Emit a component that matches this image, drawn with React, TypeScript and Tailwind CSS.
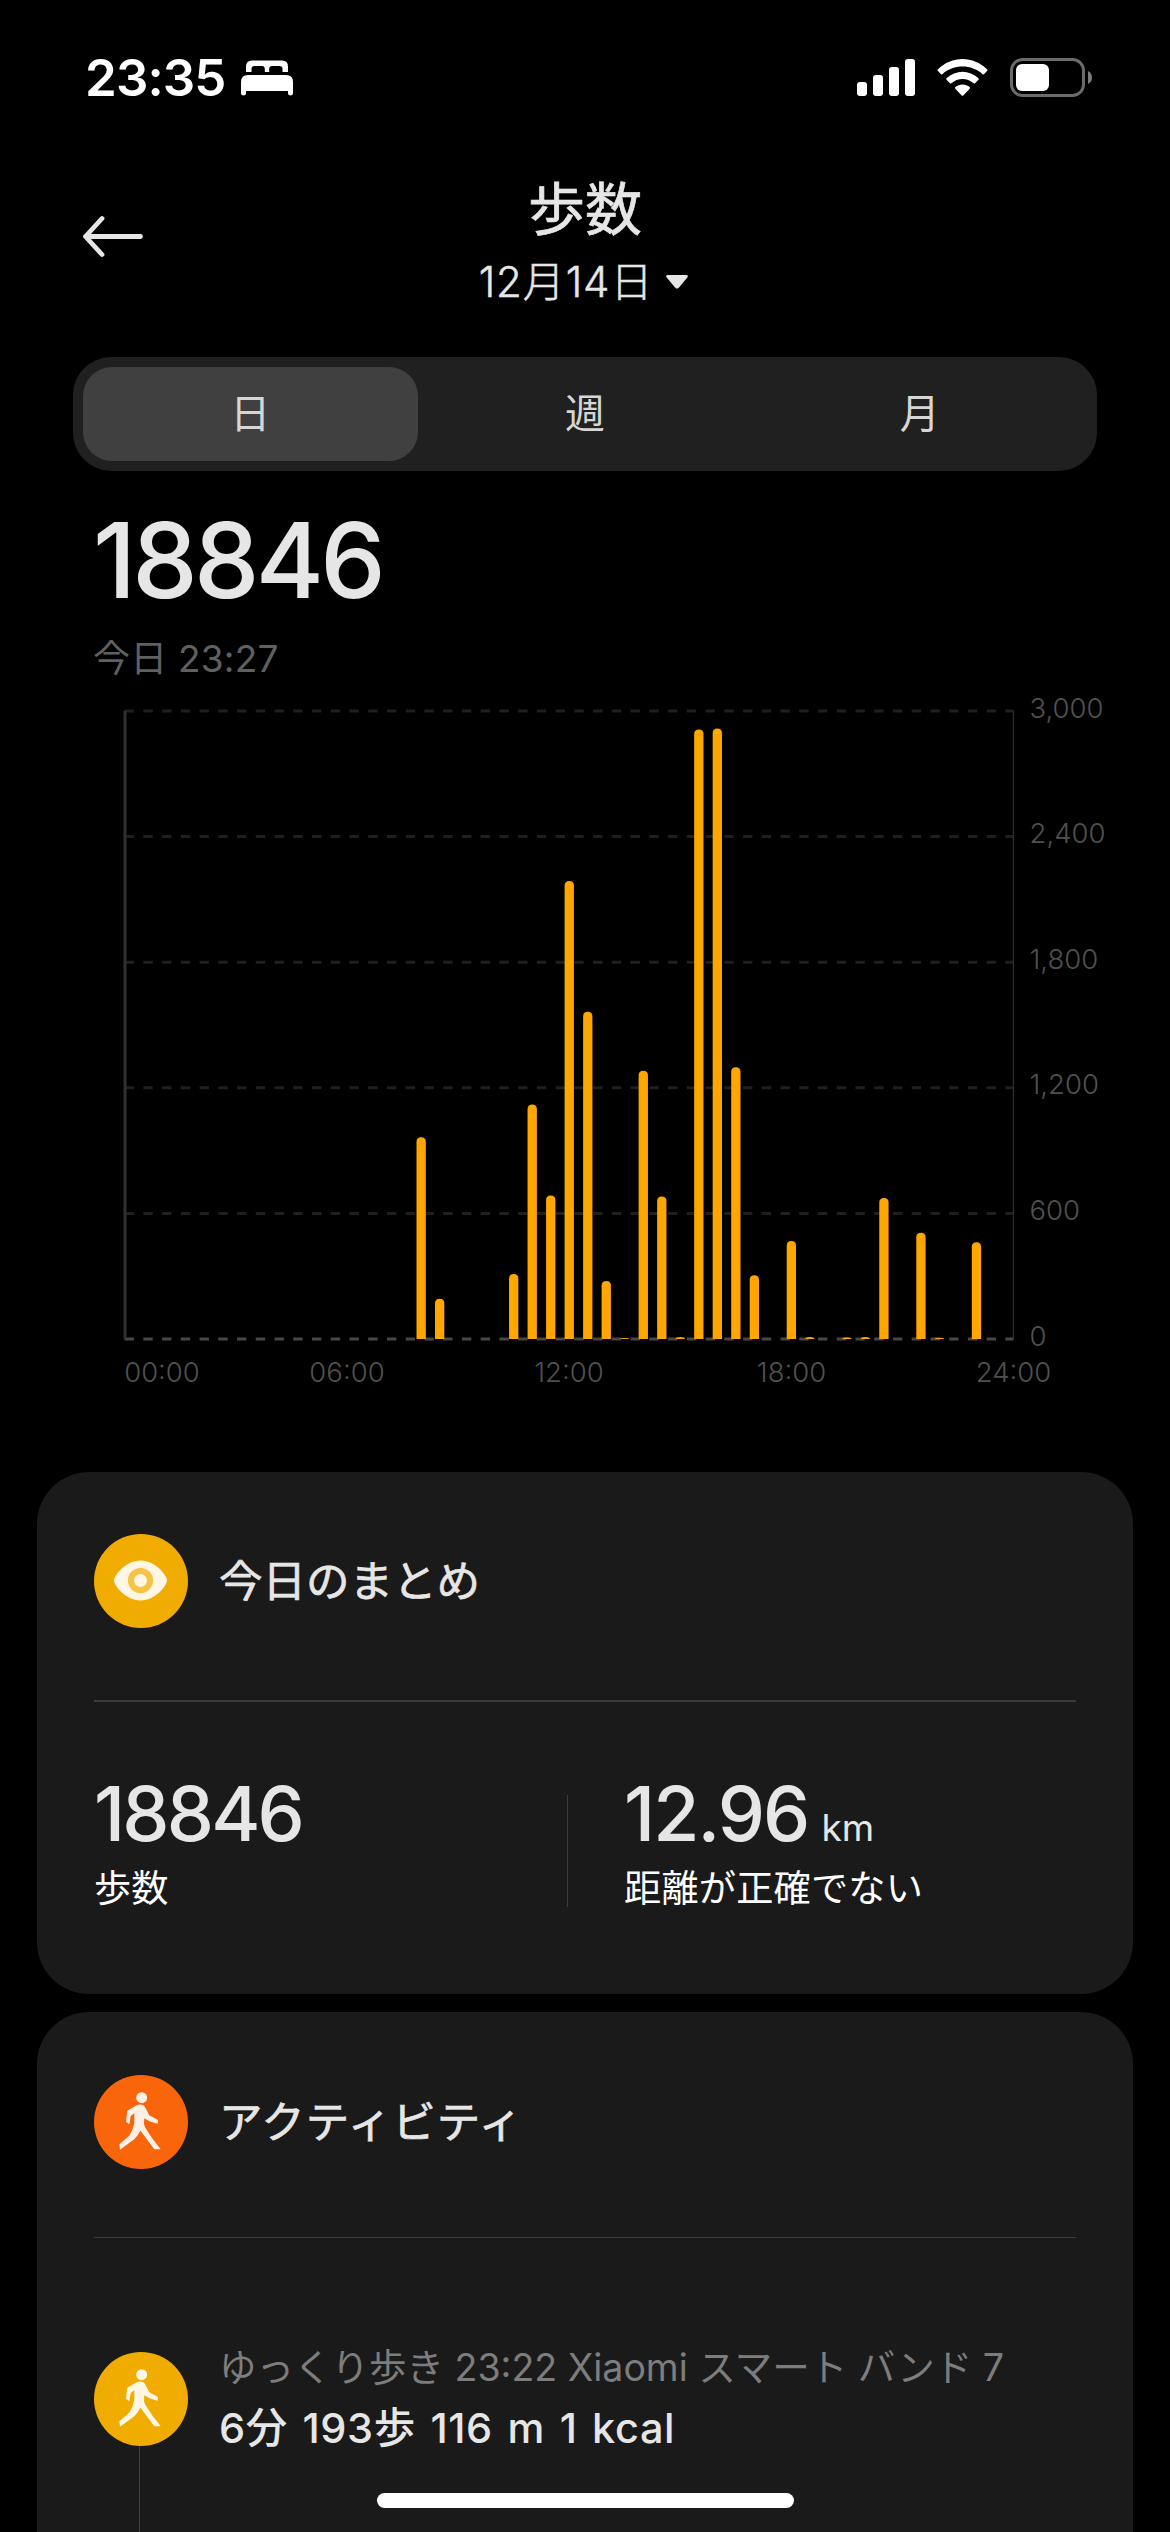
import type { ReactNode } from "react";

// steps per half hour: [slot, steps]
const steps = [
  [16, 964], [17, 192], [21, 310], [22, 1120], [23, 686], [24, 2188], [25, 1563],
  [26, 277], [27, 5], [28, 1282], [29, 681], [30, 9], [31, 2912], [32, 2916],
  [33, 1298], [34, 304], [36, 468], [37, 10], [39, 8], [40, 10], [41, 674],
  [43, 508], [44, 6], [46, 462],
];

const yTicks = ["3,000", "2,400", "1,800", "1,200", "600", "0"];

const xTicks = [
  { label: "00:00", x: 162 },
  { label: "06:00", x: 347 },
  { label: "12:00", x: 569 },
  { label: "18:00", x: 791.5 },
  { label: "24:00", x: 1013.5 },
];

const LEFT = 125;
const RIGHT = 1013.5;
const TOP = 29;
const BOTTOM = 657;

function StatusBar() {
  return (
    <div className="flex h-[155px] items-start justify-between pl-[85px] pr-[77px] pt-[58px] text-white">
      <div className="flex items-center">
        <span className="w-[156px] text-[51px] font-semibold leading-[39px] tracking-[-0.9px]">23:35</span>
        <svg width="52" height="36" viewBox="0 0 52 36" fill="currentColor">
          <path d="M5 12V6.5Q5 .5 11 .5H41Q47 .5 47 6.5V12H41.5V9Q41.5 6 38.500 6H31Q28.200 6 28.200 9V12H23.800V9Q23.800 6 21 6H13.500Q10.500 6 10.500 9V12Z" />
          <path d="M0 22Q0 15 7 15H45Q52 15 52 22V33.500Q52 35.500 49.500 35.500T47 33.500V31H5V33.500Q5 35.500 2.500 35.500T0 33.500Z" />
        </svg>
      </div>
      <div className="flex items-center">
        <svg width="58" height="39" viewBox="0 0 58 39" fill="currentColor">
          <rect x="0" y="24" width="10" height="14" rx="3" />
          <rect x="16" y="17" width="10" height="21" rx="3" />
          <rect x="32" y="9" width="10" height="29" rx="3" />
          <rect x="48" y="1" width="10" height="37" rx="3" />
        </svg>
        <svg className="ml-[22px]" width="51" height="39" viewBox="0 0 51 39" fill="currentColor">
          <path d="M.8 11.500Q.2 12.300 1 13L4 16.200Q4.700 16.800 5.400 16.200C16.500 6 34.500 6 45.600 16.200Q46.300 16.800 47 16.200L50 13Q50.800 12.300 50.200 11.500C36.500-2.500 14.500-2.500.8 11.500Z" />
          <path d="M9.500 20.300Q8.800 21.100 9.500 21.800L13 25.300Q13.700 25.900 14.400 25.300C20.700 19.600 30.300 19.600 36.600 25.300Q37.300 25.900 38 25.300L41.500 21.800Q42.200 21.100 41.500 20.300C32.500 11.600 18.500 11.600 9.500 20.300Z" />
          <path d="M18.300 29Q17.500 29.900 18.300 30.700L24.700 37.400Q25.500 38.200 26.300 37.400L32.700 30.700Q33.500 29.900 32.700 29C28.600 25.600 22.400 25.600 18.300 29Z" />
        </svg>
        <svg className="ml-[22px]" width="83" height="39" viewBox="0 0 83 39" fill="none">
          <rect x="1.500" y="1.500" width="72" height="36" rx="11" stroke="#6b6b6b" strokeWidth="3" />
          <rect x="6" y="6" width="33" height="27" rx="6" fill="white" />
          <path d="M78 13Q82 15 82 19.500T78 26Z" fill="#7c7c7c" />
        </svg>
      </div>
    </div>
  );
}

function Header() {
  return (
    <header className="flex h-[202px] items-start justify-between px-[80px]">
      <svg className="mt-[57px]" width="66" height="48" viewBox="0 0 66 48" fill="none" stroke="currentColor" strokeWidth="4.800" strokeLinecap="round" strokeLinejoin="round">
        <path d="M60.500 24.500H5.500M22 6.500L5.500 24.500L22 42.500" />
      </svg>
      <div className="flex flex-col items-center">
        <h1 className="mt-[23px] text-[57px] leading-[64px] [-webkit-text-stroke:0.7px]">歩数</h1>
        <div className="mt-[10px] flex items-center">
          <span className="text-[42px] font-light leading-[60px] tracking-[0.9px] [-webkit-text-stroke:0.5px]">12月14日</span>
          <svg className="ml-[12px] mr-[2px]" width="24" height="16" viewBox="0 0 24 16" fill="currentColor">
            <path d="M3 1H21Q24 1 22.300 3.500L14 13.500Q12 15.800 10 13.500L1.700 3.500Q0 1 3 1Z" />
          </svg>
        </div>
      </div>
      <div className="w-[66px]" />
    </header>
  );
}

function Tabs() {
  return (
    <div className="mx-[73px] flex h-[114px] rounded-[38px] bg-[#202020] p-[10px] text-[40px] text-[#d6d6d6]">
      <div className="flex flex-1 items-center justify-center rounded-[29px] bg-[#404040]">日</div>
      <div className="flex flex-1 items-center justify-center">週</div>
      <div className="flex flex-1 items-center justify-center">月</div>
    </div>
  );
}

function StepChart() {
  const slot = (RIGHT - LEFT) / 48;
  return (
    <svg width="1170" height="790" viewBox="0 0 1170 790">
      {yTicks.map((label, i) => {
        const y = TOP + (i * (BOTTOM - TOP)) / 5;
        return (
          <g key={label}>
            <path d={`M124.600 ${y}H${RIGHT}`} stroke={label === "0" ? "#474747" : "#1f1f1f"} strokeWidth="3" strokeDasharray="9.370 9.370" />
            <text x="1029.500" y={y + 6.5} fontSize="27.500" fontWeight="350" fill="#505050">{label}</text>
          </g>
        );
      })}
      <path d={`M${LEFT} ${TOP}V${BOTTOM}`} stroke="#303030" strokeWidth="3" />
      <path d={`M${RIGHT} ${TOP}V${BOTTOM}`} stroke="#303030" strokeWidth="1.200" />
      {steps.map(([i, value]) => {
        const x = LEFT + i * slot - 4.65;
        const h = (value * (BOTTOM - TOP)) / 3000;
        const r = Math.min(4.65, h);
        return (
          <path
            key={i}
            fill="#ffa700"
            d={`M${x} ${BOTTOM}v${-(h - r)}q0 ${-r} 4.650 ${-r}t4.650 ${r}v${h - r}z`}
          />
        );
      })}
      {xTicks.map((tick) => (
        <text key={tick.label} x={tick.x} y="699.500" fontSize="27.500" fontWeight="350" textAnchor="middle" fill="#505050">
          {tick.label}
        </text>
      ))}
    </svg>
  );
}

function EyeIcon() {
  return (
    <svg width="93" height="93" viewBox="0 0 93 93">
      <path d="M20 46.500C20 42 31 26.500 46.500 26.500S73 42 73 46.500S62 66.500 46.500 66.500S20 51 20 46.500Z" fill="#fff6e3" />
      <circle cx="46.500" cy="46.500" r="12.600" fill="#f6c344" />
      <circle cx="46.500" cy="46.500" r="6.500" fill="#fff6e3" />
    </svg>
  );
}

function WalkIcon({ color }: { color: string }) {
  return (
    <svg width="93" height="93" viewBox="0 0 93 93" fill={color}>
      <circle cx="47.700" cy="22.700" r="5.500" />
      <path d="M33.300 35.700L42.700 30.300Q45 29.300 47.700 29.700Q50 30 51.300 32.500L55.300 40.300L64 45L63.700 48.700L56 46.500L50.300 43.300L50 49Q50.500 52 52.500 54.500Q58 64 66.700 74.300H60.300L46.300 55.500Q44 61 40.300 64.300L26 74.700L25.300 69.300L35.300 60.700Q39 55 40.300 48.300V38.300L36.700 41L35.300 49.300L32 46.700Z" />
    </svg>
  );
}

function Badge({ className, children }: { className: string; children: ReactNode }) {
  return <div className={`size-[94px] shrink-0 overflow-hidden rounded-full ${className}`}>{children}</div>;
}

function Summary() {
  return (
    <section className="mx-[37px] h-[522px] rounded-[52px] bg-[#1a1a1a] px-[57px] pt-[62px]">
      <div className="flex items-center gap-[31px]">
        <Badge className="bg-[#f0ac00]"><EyeIcon /></Badge>
        <h2 className="text-[43.5px] leading-[60px] [-webkit-text-stroke:0.7px]">今日のまとめ</h2>
      </div>
      <div className="mt-[72px] h-[2px] bg-[#3b3b3b]" />
      <div className="flex pt-[72px]">
        <div className="w-[473px]">
          <div className="text-[75px] font-medium leading-[80px] tracking-[-2.8px]">18846</div>
          <div className="mt-[8px] text-[37.200px] leading-[54px] text-white">歩数</div>
        </div>
        <div className="mt-[21px] h-[112px] w-px bg-[#3b3b3b]" />
        <div className="pl-[56px]">
          <div className="flex h-[80px] items-baseline leading-[80px]">
            <span className="text-[75px] font-medium tracking-[-1.9px]">12.96</span>
            <span className="ml-[13px] text-[37px]">km</span>
          </div>
          <div className="mt-[8px] text-[37.200px] leading-[54px] tracking-[0.2px] text-white">距離が正確でない</div>
        </div>
      </div>
    </section>
  );
}

function Activity() {
  return (
    <section className="mx-[37px] mt-[18px] h-[640px] rounded-[52px] bg-[#1a1a1a] px-[57px] pt-[63px]">
      <div className="flex items-center gap-[31px]">
        <Badge className="bg-[#f8650a]"><WalkIcon color="#fff0e7" /></Badge>
        <h2 className="text-[43.5px] leading-[60px] tracking-[1px] [-webkit-text-stroke:0.7px]">アクティビティ</h2>
      </div>
      <div className="mt-[68px] h-px bg-[#3b3b3b]" />
      <div className="mt-[114px] flex gap-[31px]">
        <div className="flex flex-col items-center">
          <Badge className="bg-[#f0ac00]"><WalkIcon color="#fff6e3" /></Badge>
          <div className="mr-[3px] h-[200px] w-px bg-[#3f3f3f]" />
        </div>
        <div>
          <div className="mt-[-1px] whitespace-nowrap text-[37.500px] leading-[34px] text-[#7d7d7d]">ゆっくり歩き 23:22 Xiaomi スマート バンド 7</div>
          <div className="mt-[13px] whitespace-nowrap text-[41.5px] font-medium leading-[60px] tracking-[0.6px] [word-spacing:3px]">6分 193歩 116 m 1 kcal</div>
        </div>
      </div>
    </section>
  );
}

export default function App() {
  return (
    <div className="relative h-[2532px] w-[1170px] overflow-hidden bg-black font-[Inter,'Noto_Sans_CJK_JP',sans-serif] text-[#e6e6e6]">
      <StatusBar />
      <Header />
      <Tabs />
      <div className="h-[211px] pl-[93px] pt-[37px]">
        <div className="text-[104px] font-medium leading-[104px] tracking-[-3.8px]">18846</div>
        <div className="mt-[20px] text-[37px] leading-[54px] tracking-[0.2px] text-[#606060]">今日 23:27</div>
      </div>
      <StepChart />
      <Summary />
      <Activity />
      {/* home indicator */}
      <div className="absolute bottom-[24px] left-[377px] h-[15px] w-[417px] rounded-full bg-white" />
    </div>
  );
}
